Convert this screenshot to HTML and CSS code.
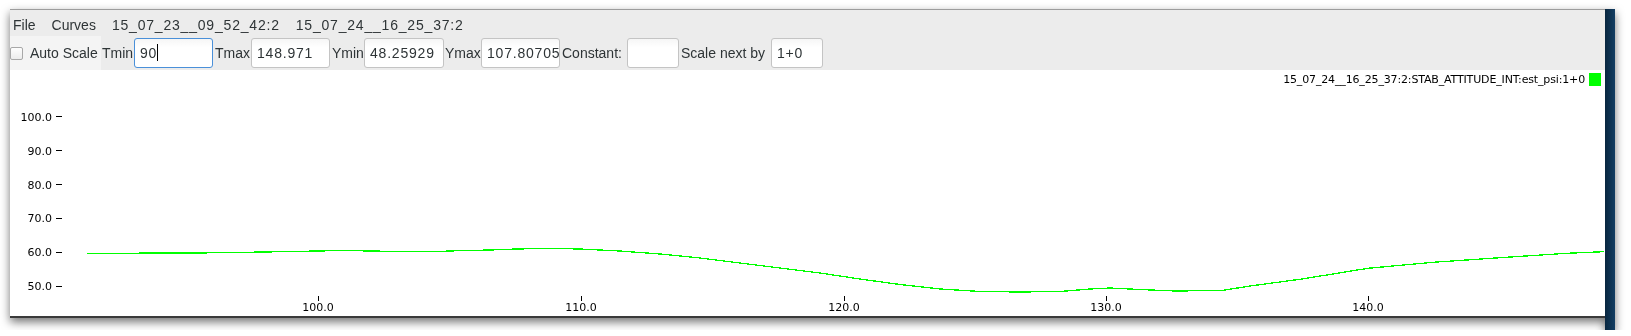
FILE: index.html
```html
<!DOCTYPE html>
<html lang="en">
<head>
  <meta charset="UTF-8">
  <title>Plot</title>
  <link rel="stylesheet" href="styles.css">
</head>
<body>
  <div class="shot">
    <div class="window">
      <div class="menubar">
        <span>File</span>
        <span>Curves</span>
        <span class="num">15_07_23__09_52_42:2</span>
        <span class="num">15_07_24__16_25_37:2</span>
      </div>
      <div class="toolbar">
        <div class="cell light"><span class="check"></span></div>
        <div class="cell light lbl">Auto Scale</div>
        <div class="cell lbl tight">Tmin</div>
        <div class="entry focus">90<span class="caret"></span></div>
        <div class="cell lbl">Tmax</div>
        <div class="entry">148.971</div>
        <div class="cell lbl">Ymin</div>
        <div class="entry">48.25929</div>
        <div class="cell lbl tight">Ymax</div>
        <div class="entry">107.80705</div>
        <div class="cell lbl">Constant:</div>
        <div class="entry"></div>
        <div class="cell lbl">Scale next by</div>
        <div class="entry">1+0</div>
      </div>
      <div class="plot">
        <svg class="chart" width="1595" height="246" viewBox="10 70 1595 246">
          <g class="ylabels">
            <text x="52" y="120.7">100.0</text>
            <text x="52" y="154.6">90.0</text>
            <text x="52" y="188.5">80.0</text>
            <text x="52" y="222.4">70.0</text>
            <text x="52" y="256.3">60.0</text>
            <text x="52" y="290.2">50.0</text>
          </g>
          <g class="ticks">
            <path d="M56 116.5h6M56 150.5h6M56 184.5h6M56 218.5h6M56 252.5h6M56 286.5h6"/>
            <path d="M318.5 296v5M581.5 296v5M844.5 296v5M1106.5 296v5M1368.5 296v5"/>
          </g>
          <g class="xlabels">
            <text x="318" y="311">100.0</text>
            <text x="581" y="311">110.0</text>
            <text x="844" y="311">120.0</text>
            <text x="1106" y="311">130.0</text>
            <text x="1368" y="311">140.0</text>
          </g>
          <polyline class="curve" points="87,253.3 197,253 265,252 339,250.6 359,250.8 417,251.8 438,251.8 448,251 490,250 516,249 550,248.4 580,249 620,251 660,254 700,258 740,263 780,268 820,273 860,279 900,284.5 940,289 980,291.5 1020,292 1060,291.5 1090,289 1110,288 1140,289.5 1175,291 1222,290.5 1250,286 1300,279.3 1368,268.3 1433,262.3 1500,257.7 1567,253.3 1604,251.7"/>
        </svg>
        <div class="legend">15_07_24__16_25_37:2:STAB_ATTITUDE_INT:est_psi:1+0<span class="swatch"></span></div>
      </div>
    </div>
    <div class="desk"></div>
  </div>
</body>
</html>
```

FILE: styles.css
```css
body {
  margin: 0;
  background-color: #ffffff;
  font-family: 'Liberation Sans', Arial, sans-serif;
  font-size: 14px;
  color: #2e3436;
}
.shot {
  display: flex;
  align-items: flex-start;
  margin: 9px 0 0 10px;
  width: 1605px;
  filter: drop-shadow(0 4px 5px rgba(0, 0, 0, 0.55));
}
.window {
  width: 1595px;
  border-top: 1px solid #9c9c9c;
  background-color: #ececec;
}
.desk {
  width: 10px;
  height: 321px;
  background: linear-gradient(to right, #08263f, #133e63);
}
.menubar {
  display: flex;
  gap: 16px;
  height: 26px;
  padding: 3px 0 0 3px;
  box-sizing: border-box;
  line-height: 24px;
}
.num {
  letter-spacing: 0.8px;
}
.toolbar {
  display: grid;
  grid-template-columns: 18px 73px 33px 79px 38px 79px 34px 80px 37px 79px 67px 52px 92px 52px;
  align-items: center;
  height: 34px;
}
.cell {
  height: 34px;
  display: flex;
  align-items: center;
  white-space: nowrap;
}
.light {
  background-color: #f4f4f4;
}
.lbl {
  padding-left: 2px;
}
.lbl.tight {
  padding-left: 1px;
}
.check {
  width: 11px;
  height: 11px;
  border: 1px solid #a8a8a8;
  border-radius: 2px;
  background: linear-gradient(#fdfdfd, #ececec);
  margin-top: 1px;
}
.entry {
  height: 30px;
  box-sizing: border-box;
  border: 1px solid #c4c4c4;
  border-radius: 3px;
  background: linear-gradient(#f6f6f6, #ffffff 30%);
  padding-left: 5px;
  line-height: 28px;
  letter-spacing: 0.8px;
  overflow: hidden;
  white-space: nowrap;
  color: #2e3436;
}
.entry.focus {
  border-color: #4a90d9;
}
.caret {
  display: inline-block;
  width: 1px;
  height: 17px;
  background-color: #000;
  vertical-align: -3px;
}
.plot {
  position: relative;
  height: 246px;
  background-color: #ffffff;
  border-bottom: 2px solid #3a3a3a;
}
.chart {
  display: block;
  font-family: 'DejaVu Sans', sans-serif;
  font-size: 11px;
}
.ylabels text {
  text-anchor: end;
  fill: #000;
}
.xlabels text {
  text-anchor: middle;
  fill: #000;
}
.ticks path {
  stroke: #000;
  stroke-width: 1;
  fill: none;
  shape-rendering: crispEdges;
}
.curve {
  fill: none;
  stroke: #00ff00;
  stroke-width: 1.3;
  shape-rendering: crispEdges;
}
.legend {
  position: absolute;
  top: 3px;
  right: 4px;
  display: flex;
  align-items: center;
  font-family: 'DejaVu Sans', sans-serif;
  font-size: 11px;
  letter-spacing: -0.15px;
  color: #000;
}
.swatch {
  width: 12px;
  height: 13px;
  margin-left: 4px;
  background-color: #00ff00;
}
```
